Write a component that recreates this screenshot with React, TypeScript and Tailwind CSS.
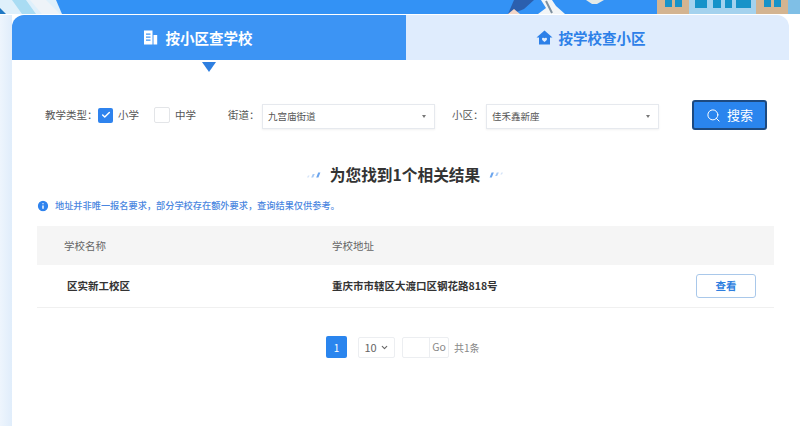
import { Search, Check, ChevronDown, Info } from 'lucide-react';

function Banner() {
  return (
    <svg className="block w-[800px] h-[14px] shrink-0" viewBox="0 0 800 14">
      <rect width="800" height="14" fill="#3392f5" />
      {/* left swoosh art */}
      <path d="M0 0H56L62 14H0Z" fill="#dff0fb" />
      <path d="M0 8L6 14H0Z" fill="#1f78c4" />
      <path d="M12 0L22 14H36L26 0Z" fill="#a9dcf3" />
      <path d="M30 0H46L60 14H42Z" fill="#eef3f8" />
      {/* people in the middle */}
      <path d="M514 0H534L524 9L512 14H508Z" fill="#2b5fae" />
      <path d="M508 14L514 9L520 14Z" fill="#f3d6c8" />
      <path d="M541 0H552L556 6L565 14H538L546 8Z" fill="#f2f5f7" />
      <path d="M546 1L552 13" stroke="#7d8f9e" strokeWidth="2" />
      <path d="M586 0H604L597 4H592Z" fill="#e4e9e6" />
      {/* buildings */}
      <rect x="657" y="0" width="32" height="14" fill="#d3b491" />
      <rect x="665" y="0" width="7" height="7" fill="#1793c9" />
      <rect x="675" y="0" width="7" height="7" fill="#1793c9" />
      <rect x="689" y="0" width="67" height="14" fill="#a4d2ee" />
      <rect x="695" y="0" width="12" height="8" fill="#1793c9" />
      <rect x="713" y="0" width="8" height="8" fill="#1793c9" />
      <rect x="725" y="0" width="7" height="8" fill="#1793c9" />
      <rect x="736" y="0" width="15" height="8" fill="#1793c9" />
      <rect x="756" y="0" width="32" height="14" fill="#d3b491" />
      <rect x="764" y="0" width="7" height="7" fill="#1793c9" />
      <rect x="774" y="0" width="7" height="7" fill="#1793c9" />
      <rect x="788" y="0" width="12" height="14" fill="#7fbfe6" />
    </svg>
  );
}

function Slashes({ flip }: { flip?: boolean }) {
  return (
    <svg className={flip ? 'w-[15px] h-[8px] rotate-180' : 'w-[15px] h-[8px]'} viewBox="0 0 15 8">
      <path d="M2 4.5L1 6.5H2.6L3.6 4.5Z" fill="#d5e4f8" />
      <path d="M6.8 3L5.2 6.5H7.2L8.8 3Z" fill="#a6c9f4" />
      <path d="M12.2 1.5L10.2 6.5H12.4L14.4 1.5Z" fill="#6ba5ee" />
    </svg>
  );
}

function SelectBox({ value }: { value: string }) {
  return (
    <div className="w-[173px] h-[25px] mt-[2px] border border-[#e6e9ee] bg-white flex items-center justify-between pl-[5px] pr-[8px] text-[9.5px] text-[#555] shadow-[0_1px_2px_rgba(0,0,0,0.06)]">
      <span>{value}</span>
      <span className="w-0 h-0 border-x-[2.5px] border-x-transparent border-t-[3px] border-t-[#777]" />
    </div>
  );
}

export default function App() {
  return (
    <div
      className="w-[800px] h-[426px] overflow-hidden bg-white flex flex-col text-[#444]"
      style={{ fontFamily: '"Noto Sans CJK SC", "Noto Sans", sans-serif' }}
    >
      <Banner />
      <div className="flex flex-1 border-t border-t-white">
        <div className="w-3 bg-gradient-to-r from-[#eef5fd] to-[#e0edfb]" />
        <div className="w-[777px] flex flex-col">
          {/* Tabs */}
          <div className="flex h-[45px]">
            <div className="w-[394px] pr-[23px] rounded-tl-xl bg-[#3c94f4] text-white flex items-center justify-center gap-[8px] text-[14.5px] font-bold">
              <svg className="w-[15px] h-[15px]" viewBox="0 0 15 15" fill="#fff">
                <path fillRule="evenodd" d="M1 0.5H9.5V14.5H1ZM3 3.5V4.7H7.5V3.5ZM3 6.5V7.7H7.5V6.5ZM3 9.5V10.7H7.5V9.5Z" />
                <path d="M10.5 5H14.2V14.5H10.5Z" />
              </svg>
              <span>按小区查学校</span>
            </div>
            <div className="w-[383px] pr-[14px] rounded-tr-xl bg-[#dfecfd] text-[#2d80e8] flex items-center justify-center gap-[6px] text-[14.5px] font-bold">
              <svg className="w-[17px] h-[15px]" viewBox="0 0 17 15" fill="#2d80e8">
                <path fillRule="evenodd" d="M8.5 0.5L16.5 7.5H14V14.5H3V7.5H0.5ZM8.5 12C10.5 10.6 11 9.8 11 9C11 7.6 9.3 7.3 8.5 8.3C7.7 7.3 6 7.6 6 9C6 9.8 6.5 10.6 8.5 12Z" />
              </svg>
              <span>按学校查小区</span>
            </div>
          </div>
          <div className="w-[394px] flex justify-center pt-[2px]">
            <div className="w-0 h-0 border-x-[7px] border-x-transparent border-t-[10px] border-t-[#2f7fe0]" />
          </div>

          {/* Filters */}
          <div className="flex items-center h-[30px] mt-[28px] pl-[33px] text-[10.5px] text-[#555]">
            <span className="w-[53px]">教学类型：</span>
            <span className="w-[15px] h-[15px] rounded-[2px] bg-[#2f83ee] flex items-center justify-center">
              <Check size={10} color="#fff" strokeWidth={3.5} />
            </span>
            <span className="ml-[5px] w-[36px]">小学</span>
            <span className="w-[16px] h-[16px] rounded-[2px] border border-[#e3e5e8] bg-white" />
            <span className="ml-[5px] w-[53px]">中学</span>
            <span className="w-[34px]">街道：</span>
            <SelectBox value="九宫庙街道" />
            <span className="ml-[17px] w-[34px]">小区：</span>
            <SelectBox value="佳禾鑫新座" />
            <button className="ml-[33px] w-[75px] h-[30px] rounded-[3px] bg-[#2a85ee] border-2 border-[#1d4a80] text-white flex items-center justify-center gap-[6px] text-[13px]">
              <Search size={15} strokeWidth={1.6} />
              <span>搜索</span>
            </button>
          </div>

          {/* Result title */}
          <div className="flex items-center justify-center gap-[9px] mt-[33px] h-[24px] pl-[9px]">
            <Slashes />
            <span className="text-[15.7px] font-bold text-[#333]">为您找到1个相关结果</span>
            <Slashes flip />
          </div>

          {/* Notice */}
          <div className="flex items-center gap-[5px] ml-[24px] mt-[12px] h-[14px] text-[9.2px] text-[#4a86e0] font-medium">
            <Info size={14} fill="#2f83ee" color="#fff" strokeWidth={2.4} />
            <span>地址并非唯一报名要求，部分学校存在额外要求，查询结果仅供参考。</span>
          </div>

          {/* Table */}
          <div className="ml-[25px] w-[737px] mt-[13px] text-[10.5px]">
            <div className="flex items-center h-[39px] bg-[#f5f5f5] text-[#666]">
              <span className="w-[295px] pl-[27px]">学校名称</span>
              <span>学校地址</span>
            </div>
            <div className="flex items-center h-[43px] border-b border-b-[#f0f0f0] font-bold text-[#333]">
              <span className="w-[295px] pl-[30px]">区实新工校区</span>
              <span className="flex-1">重庆市市辖区大渡口区钢花路818号</span>
              <button className="w-[60px] h-[24px] mr-[18px] rounded-[3px] border border-[#a9c8ea] text-[#2f7fe0] font-bold">
                查看
              </button>
            </div>
          </div>

          {/* Pagination */}
          <div className="flex items-center mt-[28px] ml-[314px] h-[22px] text-[10px] text-[#888]">
            <span className="w-[21px] h-[22px] rounded-[2px] bg-[#2a85ee] text-white flex items-center justify-center">1</span>
            <span className="ml-[11px] w-[37px] h-[21px] rounded-[2px] border border-[#eceef1] flex items-center justify-center gap-[3px] text-[#666] text-[11px]">
              10
              <ChevronDown size={9} strokeWidth={3} />
            </span>
            <span className="ml-[7px] w-[47px] h-[21px] rounded-[2px] border border-[#eceef1] flex">
              <span className="w-[27px] border-r border-r-[#eceef1]" />
              <span className="flex-1 flex items-center justify-center text-[10.5px]">Go</span>
            </span>
            <span className="ml-[5px]">共1条</span>
          </div>
        </div>
      </div>
    </div>
  );
}
